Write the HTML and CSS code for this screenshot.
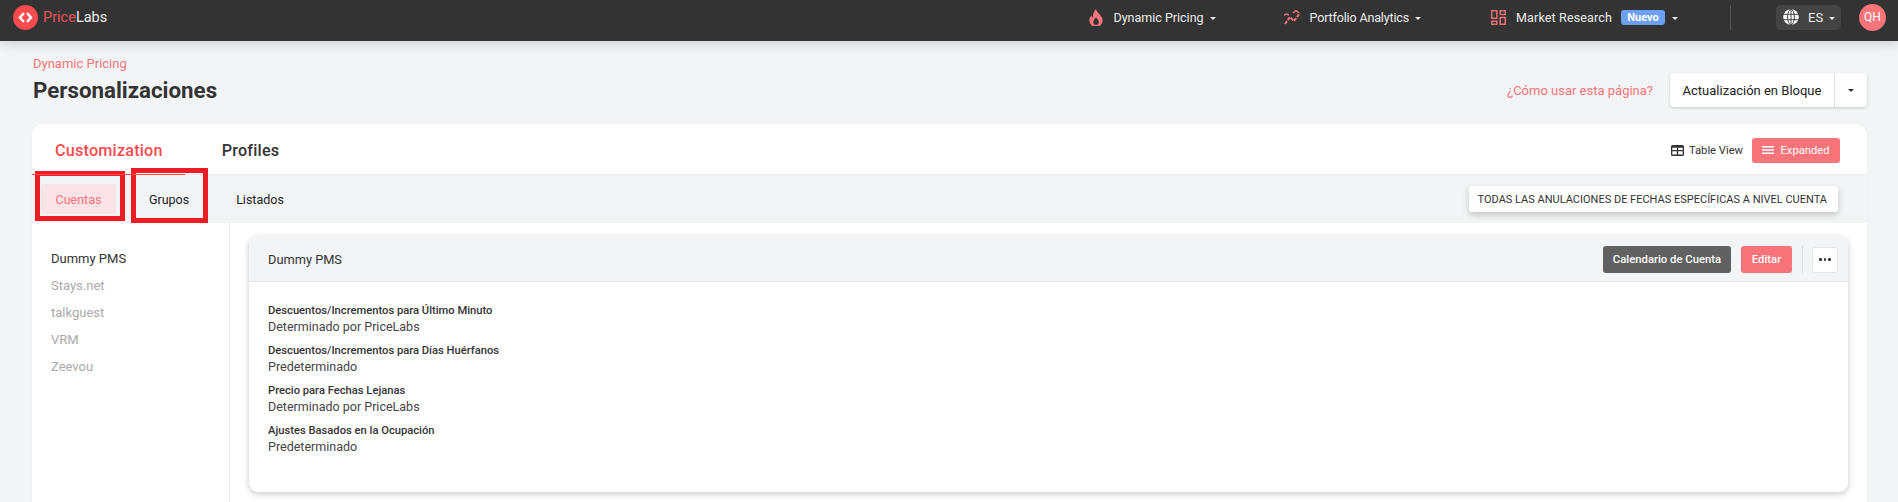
FILE: index.html
```html
<!DOCTYPE html>
<html lang="es">
<head>
<meta charset="utf-8">
<title>Personalizaciones</title>
<link rel="stylesheet" href="styles.css">
</head>
<body>
<header class="topbar">
  <div class="brand">
    <svg class="logo" viewBox="0 0 26 26"><circle cx="13" cy="13" r="13" fill="#fb4b4e"/><path d="M10.500 7.500 5.500 13l5 5.500 1.800-1.800L8.900 13l3.400-3.700zM15.500 7.500 20.500 13l-5 5.500-1.800-1.800 3.400-3.700-3.400-3.700z" fill="#fff"/></svg>
    <span class="brand-name"><span class="brand-red">Price</span>Labs</span>
  </div>
  <nav class="nav">
    <a class="nav-item nav-dp">
      <svg class="nav-icon" viewBox="0 0 14 18"><path d="M7 0c.8 2.800 2 3.800 3.600 5.600C12.600 7.800 14 9.500 14 12a7 7 0 0 1-14 0c0-2.500 1-4.200 2.200-5.500.1 1.400.6 2.300 1.500 2.800C3.500 5.800 4.800 2.400 7 0zm0 9c-1.500 1.600-3 3-3 4.800a3 3 0 0 0 6 0C10 12 8.500 10.600 7 9z" fill="#f6747a" fill-rule="evenodd"/></svg>
      <span>Dynamic Pricing</span><i class="caret"></i>
    </a>
    <a class="nav-item nav-pa">
      <svg class="nav-icon-wide" viewBox="0 0 18 15"><path d="M1 14l5-7 4 4 6-8" fill="none" stroke="#f6747a" stroke-width="2" stroke-dasharray="3.500 1.300"/><path d="M9 3l3-2.500L15 3M0 5l2.500-1L5 5" fill="none" stroke="#f6747a" stroke-width="1.600"/></svg>
      <span>Portfolio Analytics</span><i class="caret"></i>
    </a>
    <a class="nav-item nav-mr">
      <svg class="nav-icon-grid" viewBox="0 0 16 16"><g fill="none" stroke="#f6747a" stroke-width="1.500"><rect x=".8" y=".8" width="5.400" height="8"/><rect x="9.800" y=".8" width="5.400" height="4"/><rect x=".8" y="12" width="5.400" height="3.200"/><rect x="9.800" y="8" width="5.400" height="7.200"/></g></svg>
      <span class="nav-mr-label">Market Research</span><b class="badge">Nuevo</b><i class="caret"></i>
    </a>
  </nav>
  <div class="divider"></div>
  <div class="lang">
    <svg class="globe" viewBox="0 0 16 16"><circle cx="8" cy="8" r="7.800" fill="#fff"/><g fill="none" stroke="#444" stroke-width="1"><ellipse cx="8" cy="8" rx="3.400" ry="7.800"/><path d="M0 5.300h16M0 10.700h16M8 0v16"/></g></svg>
    <span>ES</span><i class="caret"></i>
  </div>
  <div class="avatar">QH</div>
</header>

<main class="page">
  <div class="page-head">
    <div class="titles">
      <div class="crumb">Dynamic Pricing</div>
      <h1 class="title">Personalizaciones</h1>
    </div>
    <div class="head-actions">
      <a class="help">¿Cómo usar esta página?</a>
      <div class="split">
        <span class="split-main">Actualización en Bloque</span>
        <span class="split-arrow"><i class="caret caret-dark"></i></span>
      </div>
    </div>
  </div>

  <section class="card">
    <div class="tabs">
      <div class="tab tab-active">Customization</div>
      <div class="tab">Profiles</div>
      <div class="views">
        <span class="view-table">
          <svg class="table-icon" viewBox="0 0 13 11"><path d="M1.500 0h10A1.500 1.500 0 0 1 13 1.500v8a1.500 1.500 0 0 1-1.500 1.500h-10A1.500 1.500 0 0 1 0 9.500v-8A1.500 1.500 0 0 1 1.500 0zM1.300 2.800v2.200h4.500V2.800zm5.900 0v2.200h4.500V2.800zM1.300 6.200v3.300h4.500V6.200zm5.900 0v3.300h4.500V6.200z" fill="#333" fill-rule="evenodd"/></svg>
          Table View
        </span>
        <span class="view-expanded">
          <svg class="lines-icon" viewBox="0 0 12 8"><path d="M0 0h12v1.600H0zM0 3.200h12v1.600H0zM0 6.400h12V8H0z" fill="#fff"/></svg>
          Expanded
        </span>
      </div>
    </div>
    <div class="subtabs">
      <span class="subtab subtab-active">Cuentas</span>
      <span class="subtab">Grupos</span>
      <span class="subtab">Listados</span>
      <span class="override">TODAS LAS ANULACIONES DE FECHAS ESPECÍFICAS A NIVEL CUENTA</span>
    </div>
    <div class="content">
      <aside class="side">
        <div class="side-item side-active">Dummy PMS</div>
        <div class="side-item">Stays.net</div>
        <div class="side-item">talkguest</div>
        <div class="side-item">VRM</div>
        <div class="side-item">Zeevou</div>
      </aside>
      <div class="panel-wrap">
        <article class="panel">
          <div class="panel-head">
            <span class="panel-title">Dummy PMS</span>
            <div class="panel-actions">
              <span class="btn btn-dark">Calendario de Cuenta</span>
              <span class="btn btn-red">Editar</span>
              <span class="vsep"></span>
              <span class="btn-more"><i></i><i></i><i></i></span>
            </div>
          </div>
          <div class="panel-body">
            <div class="field"><div class="f-label">Descuentos/Incrementos para Último Minuto</div><div class="f-value">Determinado por PriceLabs</div></div>
            <div class="field"><div class="f-label">Descuentos/Incrementos para Días Huérfanos</div><div class="f-value">Predeterminado</div></div>
            <div class="field"><div class="f-label">Precio para Fechas Lejanas</div><div class="f-value">Determinado por PriceLabs</div></div>
            <div class="field"><div class="f-label">Ajustes Basados en la Ocupación</div><div class="f-value">Predeterminado</div></div>
          </div>
        </article>
      </div>
    </div>
    <div class="mark mark-a"></div>
    <div class="mark mark-b"></div>
    <div class="tab-line"></div>
  </section>
</main>
</body>
</html>
```

FILE: styles.css
```css
* { box-sizing: border-box; }
html, body { margin: 0; height: 502px; overflow: hidden; }
body { background: #f3f4f6; font-family: Roboto, "Noto Sans", sans-serif; color: #333; font-size: 14px; }

.topbar { height: 41px; background: #333; display: flex; align-items: center; padding: 0 12px 7px 13px; color: #eee; box-shadow: 0 2px 12px rgba(0,0,0,.18); position: relative; }
.brand { display: flex; align-items: center; gap: 5px; }
.logo { width: 25px; height: 25px; display: block; }
.brand-name { font-size: 14.500px; color: #eee; }
.brand-red { color: #f0525a; }

.nav { display: flex; margin-left: auto; align-items: center; font-size: 12.500px; }
.nav-item { display: flex; align-items: center; }
.nav-icon { width: 14px; height: 17px; margin-right: 10px; }
.nav-icon-wide { width: 18px; height: 15px; margin-right: 8px; }
.nav-icon-grid { width: 15px; height: 15px; margin-right: 10px; }
.nav-dp { margin-right: 68px; }
.nav-pa { margin-right: 70px; letter-spacing: -.15px; }
.nav-mr-label { letter-spacing: .15px; }
.caret { display: inline-block; width: 0; height: 0; border-left: 3px solid transparent; border-right: 3px solid transparent; border-top: 3px solid #eee; margin-left: 6px; margin-top: 2px; }
.caret-dark { border-top-color: #333; margin: 0; }
.badge { background: #6c9ff7; color: #fff; font-size: 11px; font-weight: 700; height: 15px; width: 44px; border-radius: 3px; margin-left: 9px; margin-right: 1px; display: flex; align-items: center; justify-content: center; }
.divider { width: 1px; height: 25px; background: #555; margin-left: 52px; margin-right: 45px; }
.lang { width: 65px; height: 25px; border-radius: 5px; background: #444; display: flex; align-items: center; padding-left: 7px; font-size: 13px; }
.globe { width: 16px; height: 16px; margin-right: 9px; }
.avatar { width: 27px; height: 27px; border-radius: 50%; background: #f6747a; color: #fff; font-size: 12px; display: flex; align-items: center; justify-content: center; margin-left: 18px; }

.page { padding: 0 31px 0 32px; }
.page-head { display: flex; justify-content: space-between; height: 83px; }
.titles { padding: 15px 0 0 1px; }
.crumb { color: #f6747a; font-size: 13px; line-height: 16px; }
.title { margin: 5px 0 0; font-size: 22.300px; line-height: 26px; font-weight: 700; color: #333; }
.head-actions { display: flex; align-items: center; height: 34px; margin-top: 32px; }
.help { color: #f6747a; font-size: 13px; margin-right: 17px; }
.split { display: flex; width: 197px; height: 34px; background: #fff; border-radius: 4px; box-shadow: 0 1px 3px rgba(0,0,0,.18); align-items: center; font-size: 13px; color: #222; }
.split-main { width: 165px; height: 34px; display: flex; align-items: center; justify-content: center; border-right: 1px solid #e2e2e2; white-space: nowrap; }
.split-arrow { flex: 1; display: flex; justify-content: center; }

.card { background: #fff; border-radius: 11px 11px 0 0; position: relative; height: 378px; box-shadow: 0 0 2px rgba(0,0,0,.06); }
.tabs { height: 51px; padding-top: 2px; border-bottom: 1px solid #e5e7eb; display: flex; align-items: center; }
.tab { font-size: 16.200px; font-weight: 500; color: #333; letter-spacing: .2px; }
.tab:first-child { margin-left: 23px; }
.tab-active { color: #fb4b4e; margin-right: 59px; }
.views { margin-left: auto; display: flex; align-items: center; margin-right: 27px; font-size: 11.200px; }
.view-table { display: flex; align-items: center; gap: 5px; margin-right: 9px; color: #333; }
.table-icon { width: 13px; height: 11px; }
.view-expanded { background: #f6747a; color: #fff; height: 25px; width: 88px; border-radius: 3px; display: flex; align-items: center; justify-content: center; gap: 6px; }
.lines-icon { width: 12px; height: 8px; }

.subtabs { height: 48px; background: #f3f4f6; display: flex; align-items: center; font-size: 12.500px; color: #222; padding-right: 29px; }
.subtab { height: 30px; display: flex; align-items: center; justify-content: center; border-radius: 3px; }
.subtab:nth-child(1) { margin-left: 9px; width: 75px; }
.subtab:nth-child(2) { width: 72px; margin-left: 17px; }
.subtab:nth-child(3) { width: 70px; margin-left: 20px; }
.subtab-active { background: #f9e3e6; color: #f6747a; }
.override { margin-left: auto; height: 26px; background: #fff; border-radius: 3px; padding: 0 11px 0 9px; display: flex; align-items: center; font-size: 11px; color: #333; box-shadow: 0 3px 7px rgba(0,0,0,.2); }

.content { display: flex; height: 279px; }
.side { width: 198px; border-right: 1px solid #e5e7eb; padding: 22px 0 0 19px; flex: none; }
.side-item { height: 27px; line-height: 27px; font-size: 13px; color: #aaa; }
.side-active { color: #333; }
.panel-wrap { flex: 1; padding: 13px 19px 0 19px; }
.panel { background: #fff; border-radius: 9px; height: 256px; box-shadow: 0 2px 6px rgba(0,0,0,.22); overflow: hidden; }
.panel-head { height: 46px; background: #f3f4f6; border-bottom: 1px solid #e0e1e4; display: flex; align-items: center; justify-content: space-between; padding: 2px 10px 0 19px; }
.panel-title { font-size: 12.800px; color: #333; }
.panel-actions { display: flex; align-items: center; }
.btn { height: 27px; border-radius: 3px; font-size: 11.300px; font-weight: 500; color: #fff; display: flex; align-items: center; justify-content: center; }
.btn-dark { width: 128px; background: #616161; }
.btn-red { width: 51px; background: #f6747a; margin-left: 10px; }
.vsep { width: 1px; height: 27px; background: #ddd; margin: 0 9px 0 10px; }
.btn-more { width: 26px; height: 26px; background: #fff; border: 1px solid #e5e7eb; border-radius: 3px; display: flex; align-items: center; justify-content: center; gap: 2px; }
.btn-more i { width: 2.500px; height: 2.500px; border-radius: 50%; background: #333; }
.panel-body { padding: 20px 19px 0; }
.field { height: 40px; }
.f-label { font-size: 11.200px; line-height: 17px; font-weight: 500; color: #333; }
.f-value { font-size: 12.500px; line-height: 16px; color: #444; }

.mark { position: absolute; border: 5px solid #ed1c24; pointer-events: none; }
.mark-a { left: 3px; top: 47px; width: 90px; height: 50px; }
.mark-b { left: 99px; top: 44px; width: 77px; height: 55px; }
.tab-line { position: absolute; left: 0; top: 50px; width: 153px; height: 1px; background: #fb4b4e; }
```
